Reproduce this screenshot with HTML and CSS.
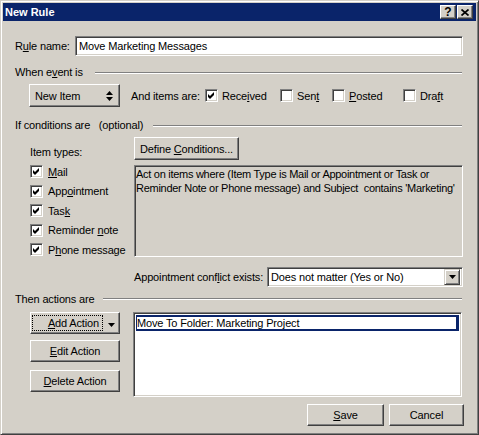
FILE: index.html
```html
<!DOCTYPE html>
<html>
<head>
<meta charset="utf-8">
<title>New Rule</title>
<link rel="stylesheet" href="styles.css">
</head>
<body>
<div class="window">
  <div class="titlebar">
    <span class="title">New Rule</span>
    <div class="tbtns">
      <span class="tbtn help">?</span>
      <span class="tbtn close"><svg width="8" height="7" viewBox="0 0 8 7"><path d="M0.5 0.5 L7.5 6.5 M7.5 0.5 L0.5 6.5" stroke="#000" stroke-width="1.7" fill="none"/></svg></span>
    </div>
  </div>
  <div class="content">
    <div class="name-row">
      <span class="name-lbl">R<u>u</u>le name:</span>
      <div class="textbox"><span>Move Marketing Messages</span></div>
    </div>

    <div class="group-head head-event"><span>When e<u>v</u>ent is</span><i class="groove"></i></div>

    <div class="event-row">
      <div class="btn spin-btn"><span>New Item</span>
        <svg width="7" height="10" viewBox="0 0 7 10"><path d="M3.5 0 L7 4 L0 4 Z M0 6 L7 6 L3.5 10 Z" fill="#000"/></svg>
      </div>
      <span class="and-lbl">And items are:</span>
      <span class="ck-item w-rec"><span class="chk"><svg width="9" height="9" viewBox="0 0 9 9"><path d="M1 3 L3 5 L7 1 L7 4 L3 8 L1 6 Z" fill="#000"/></svg></span><span>Rece<u>i</u>ved</span></span>
      <span class="ck-item w-sent"><span class="chk"></span><span>Sen<u>t</u></span></span>
      <span class="ck-item w-post"><span class="chk"></span><span><u>P</u>osted</span></span>
      <span class="ck-item"><span class="chk"></span><span>Dra<u>f</u>t</span></span>
    </div>

    <div class="group-head head-cond"><span class="pre">If conditions are   (optional)</span><i class="groove"></i></div>

    <div class="cond-section">
      <div class="types-col">
        <div class="types-lbl">Item types:</div>
        <div class="types-list">
          <div class="type-row"><span class="chk"><svg width="9" height="9" viewBox="0 0 9 9"><path d="M1 3 L3 5 L7 1 L7 4 L3 8 L1 6 Z" fill="#000"/></svg></span><span><u>M</u>ail</span></div>
          <div class="type-row"><span class="chk"><svg width="9" height="9" viewBox="0 0 9 9"><path d="M1 3 L3 5 L7 1 L7 4 L3 8 L1 6 Z" fill="#000"/></svg></span><span>App<u>o</u>intment</span></div>
          <div class="type-row"><span class="chk"><svg width="9" height="9" viewBox="0 0 9 9"><path d="M1 3 L3 5 L7 1 L7 4 L3 8 L1 6 Z" fill="#000"/></svg></span><span>Tas<u>k</u></span></div>
          <div class="type-row"><span class="chk"><svg width="9" height="9" viewBox="0 0 9 9"><path d="M1 3 L3 5 L7 1 L7 4 L3 8 L1 6 Z" fill="#000"/></svg></span><span>Reminder <u>n</u>ote</span></div>
          <div class="type-row"><span class="chk"><svg width="9" height="9" viewBox="0 0 9 9"><path d="M1 3 L3 5 L7 1 L7 4 L3 8 L1 6 Z" fill="#000"/></svg></span><span>P<u>h</u>one message</span></div>
        </div>
      </div>
      <div class="cond-col">
        <div class="btn define-btn"><span>Define <u>C</u>onditions...</span></div>
        <div class="cond-box">Act on items where (Item Type is Mail or Appointment or Task or
Reminder Note or Phone message) and Subject  contains 'Marketing'</div>
      </div>
    </div>

    <div class="conflict-row">
      <span>Appointment conf<u>l</u>ict exists:</span>
      <div class="select">
        <span class="sel-text">Does not matter (Yes or No)</span>
        <span class="sel-btn"><svg width="7" height="4" viewBox="0 0 7 4"><path d="M0 0 L7 0 L3.5 4 Z" fill="#000"/></svg></span>
      </div>
    </div>

    <div class="group-head head-act"><span>Then actions are</span><i class="groove"></i></div>

    <div class="act-section">
      <div class="act-col">
        <div class="btn add-btn"><span class="focus"><span><u>A</u>dd Action</span></span>
          <svg width="7" height="4" viewBox="0 0 7 4"><path d="M0 0 L7 0 L3.5 4 Z" fill="#000"/></svg>
        </div>
        <div class="btn act-btn edit-btn"><span><u>E</u>dit Action</span></div>
        <div class="btn act-btn del-btn"><span><u>D</u>elete Action</span></div>
      </div>
      <div class="act-list">
        <div class="act-item">Move To Folder: Marketing Project</div>
      </div>
    </div>

    <div class="bottom-row">
      <div class="btn save-btn"><span><u>S</u>ave</span></div>
      <div class="btn cancel-btn"><span>Cancel</span></div>
    </div>
  </div>
</div>
</body>
</html>
```

FILE: styles.css
```css
* { box-sizing: border-box; }
html, body { margin: 0; padding: 0; }
body {
  width: 479px;
  height: 435px;
  overflow: hidden;
  background: #d4d0c8;
  font-family: "Liberation Sans", Arial, sans-serif;
  font-size: 11px;
  color: #000;
}
u { text-decoration: underline; text-underline-offset: 1px; }

.window {
  width: 479px;
  height: 435px;
  background: #d4d0c8;
  border: 1px solid;
  border-color: #d4d0c8 #404040 #404040 #d4d0c8;
  box-shadow: inset 1px 1px #fff, inset -1px -1px #808080;
  padding: 2px;
  display: flex;
  flex-direction: column;
}

.titlebar {
  height: 18px;
  flex: none;
  background: #0a246a;
  color: #fff;
  display: flex;
  align-items: center;
  justify-content: space-between;
  padding: 0 3px 0 2px;
}
.title { font-weight: bold; font-size: 11px; }
.tbtns { display: flex; gap: 1px; }
.tbtn {
  width: 16px;
  height: 14px;
  background: #d4d0c8;
  border: 1px solid;
  border-color: #fff #404040 #404040 #fff;
  box-shadow: inset -1px -1px #808080;
  display: flex;
  align-items: center;
  justify-content: center;
  color: #000;
  font-weight: bold;
  font-size: 12px;
  line-height: 12px;
}

.content {
  flex: 1;
  padding: 0 13px 0 12px;
  display: flex;
  flex-direction: column;
  letter-spacing: -0.15px;
}

.btn {
  background: #d4d0c8;
  border: 1px solid;
  border-color: #fff #404040 #404040 #fff;
  box-shadow: inset -1px -1px #808080;
  display: flex;
  align-items: center;
  justify-content: center;
}

.name-row {
  margin-top: 15px;
  height: 20px;
  display: flex;
  align-items: center;
}
.name-lbl { width: 60px; flex: none; }
.textbox {
  flex: 1;
  height: 20px;
  background: #fff;
  border: 1px solid;
  border-color: #808080 #fff #fff #808080;
  box-shadow: inset 1px 1px #404040, inset -1px -1px #d4d0c8;
  padding-left: 3px;
  display: flex;
  align-items: center;
}

.group-head {
  height: 13px;
  line-height: 13px;
  display: flex;
  align-items: center;
}
.pre { white-space: pre; }
.groove {
  flex: 1;
  height: 2px;
  border-top: 1px solid #808080;
  border-bottom: 1px solid #fff;
  margin-left: 10px;
  margin-right: 1px;
}
.head-event { margin-top: 10px; }
.head-event .groove { margin-left: 12px; }
.head-cond { margin-top: 12px; }
.head-act { margin-top: 6px; }
.head-act .groove { margin-left: 8px; }

.event-row {
  margin-top: 5px;
  height: 23px;
  display: flex;
  align-items: center;
}
.spin-btn {
  margin-left: 14px;
  width: 91px;
  height: 23px;
  justify-content: space-between;
  padding: 0 6px 0 5px;
}
.and-lbl { margin-left: 11px; width: 74px; flex: none; }
.ck-item { display: flex; align-items: center; flex: none; }
.ck-item .chk { margin-right: 4px; }
.w-rec { width: 75px; }
.w-sent { width: 52px; }
.w-post { width: 71px; }

.chk {
  width: 13px;
  height: 13px;
  flex: none;
  background: #fff;
  border: 1px solid;
  border-color: #808080 #fff #fff #808080;
  box-shadow: inset 1px 1px #404040, inset -1px -1px #d4d0c8;
  display: flex;
  align-items: center;
  justify-content: center;
}
.chk svg { display: block; }

.cond-section {
  margin-top: 5px;
  display: flex;
}
.types-col {
  width: 119px;
  flex: none;
  padding-left: 15px;
  padding-top: 9px;
}
.types-lbl { height: 13px; line-height: 13px; }
.types-list { margin-top: 3px; }
.type-row {
  height: 19.5px;
  display: flex;
  align-items: center;
}
.type-row .chk { margin-right: 5px; }
.cond-col { width: 329px; flex: none; }
.define-btn { width: 105px; height: 23px; }
.cond-box {
  margin-top: 5px;
  height: 92px;
  background: #d4d0c8;
  border: 1px solid;
  border-color: #808080 #fff #fff #808080;
  box-shadow: inset 1px 1px #404040, inset -1px -1px #d4d0c8;
  padding: 1px 0 0 1px;
  line-height: 14px;
  letter-spacing: -0.28px;
  white-space: pre;
  overflow: hidden;
}

.conflict-row {
  margin-top: 7px;
  height: 20px;
  padding-left: 119px;
  display: flex;
  align-items: center;
}
.select {
  margin-left: auto;
  width: 196px;
  height: 20px;
  background: #fff;
  border: 1px solid;
  border-color: #808080 #fff #fff #808080;
  box-shadow: inset 1px 1px #404040, inset -1px -1px #d4d0c8;
  display: flex;
  align-items: center;
  padding: 2px;
}
.sel-text { flex: 1; padding-left: 1px; }
.sel-btn {
  width: 16px;
  height: 16px;
  background: #d4d0c8;
  border: 1px solid;
  border-color: #d4d0c8 #404040 #404040 #d4d0c8;
  box-shadow: inset 1px 1px #fff, inset -1px -1px #808080;
  display: flex;
  align-items: center;
  justify-content: center;
}

.act-section {
  margin-top: 6px;
  display: flex;
}
.act-col {
  width: 118px;
  flex: none;
  padding-left: 15px;
  display: flex;
  flex-direction: column;
}
.add-btn {
  width: 90px;
  height: 22px;
  justify-content: flex-start;
  align-items: flex-start;
  padding: 2px 0 0 1px;
}
.focus {
  width: 71px;
  height: 16px;
  outline: 1px dotted #000;
  outline-offset: -1px;
  display: flex;
  align-items: center;
  justify-content: flex-end;
  padding-right: 4px;
}
.add-btn svg { margin: 8px 0 0 5px; }
.act-btn { width: 90px; height: 22px; }
.edit-btn { margin-top: 6px; }
.del-btn { margin-top: 8px; }
.act-list {
  width: 329px;
  height: 85px;
  background: #fff;
  border: 1px solid;
  border-color: #808080 #fff #fff #808080;
  box-shadow: inset 1px 1px #404040, inset -1px -1px #d4d0c8;
  padding: 2px;
}
.act-item {
  height: 16px;
  border: 2px solid #0a246a;
  border-left-width: 1px;
  border-right-width: 3px;
  line-height: 12px;
  padding-left: 0;
}

.bottom-row {
  margin-top: 7px;
  height: 22px;
  display: flex;
  justify-content: flex-end;
  margin-right: -1px;
}
.save-btn { width: 77px; height: 22px; }
.cancel-btn { width: 75px; height: 22px; margin-left: 5px; }
```
